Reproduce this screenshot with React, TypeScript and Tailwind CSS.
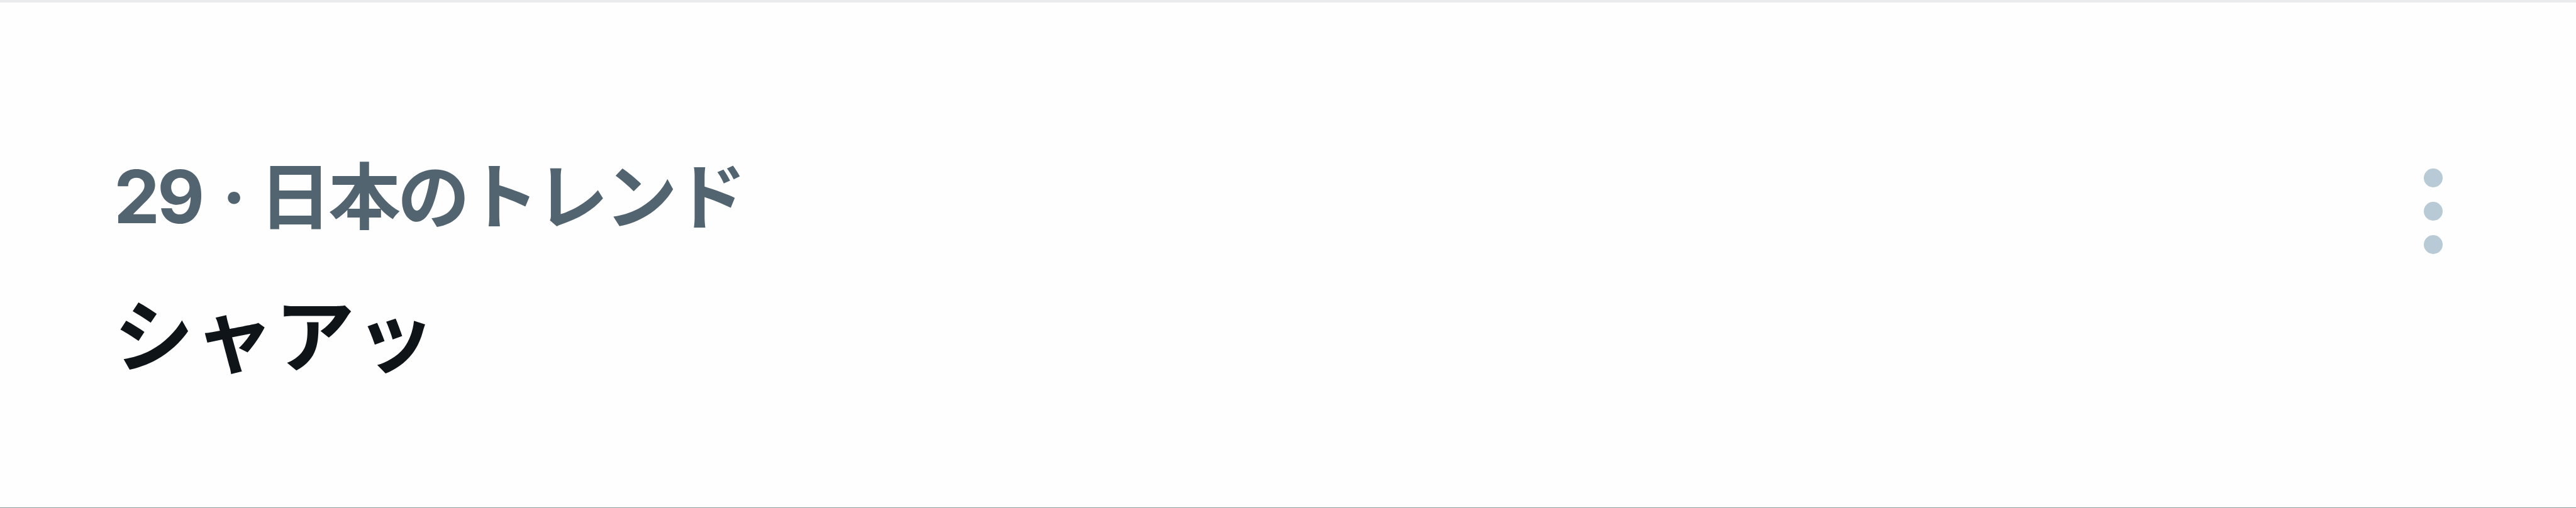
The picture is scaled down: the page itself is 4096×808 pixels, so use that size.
const TrendMenu = () => (
    <button
        className="mt-[264px] mr-[212px] flex h-fit flex-col gap-[23px]"
        aria-label="menu"
    >
        <span className="h-[30px] w-[30px] rounded-full bg-[#b7cad5]" />
        <span className="h-[30px] w-[30px] rounded-full bg-[#b7cad5]" />
        <span className="h-[30px] w-[30px] rounded-full bg-[#b7cad5]" />
    </button>
);

export default function App(): JSX.Element {
    return (
        <div className="flex h-[808px] w-[4096px] justify-between overflow-hidden border-t-4 border-b border-t-[#e8eaeb] border-b-[#8f9a9f] bg-[#fefefe] font-['Inter','Noto_Sans_CJK_JP',sans-serif] font-bold">
            <div className="mt-[219px] ml-[181px]">
                <p className="flex h-[180px] items-baseline whitespace-pre text-[#536471]">
                    <span className="w-[231px] text-[116px] leading-[180px] tracking-[-4px] [word-spacing:8px]">
                        29 ·
                    </span>
                    <span className="text-[115px] leading-[180px] tracking-[-5px]">
                        日本のトレンド
                    </span>
                </p>
                <p className="mt-[43px] text-[127px] leading-[180px] tracking-[1px] text-[#0f1419]">
                    シャアッ
                </p>
            </div>
            <TrendMenu />
        </div>
    );
}
